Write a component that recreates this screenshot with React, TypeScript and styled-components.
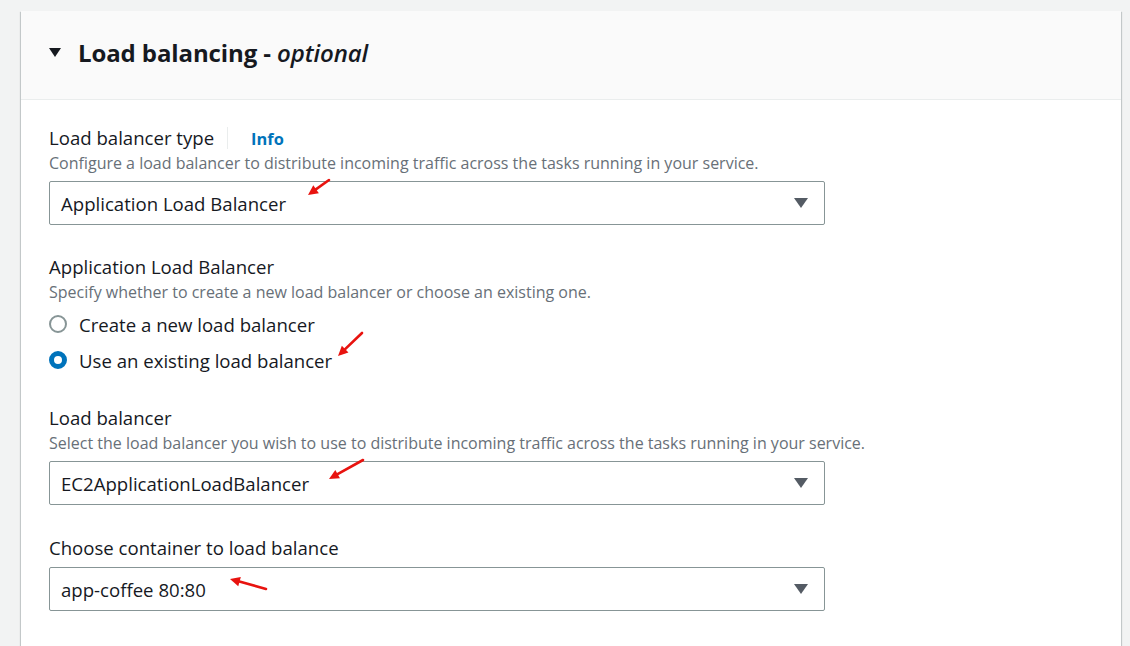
import React from 'react';
import styled, { createGlobalStyle } from 'styled-components';

const GlobalStyle = createGlobalStyle`
    html, body {
        margin: 0;
        padding: 0;
        background: #f2f3f3;
        font-family: 'Open Sans', 'Noto Sans', sans-serif;
        color: #16191f;
    }
`;

const Page = styled.div`
    position: relative;
    padding: 11px 9px 0 21px;
    height: 646px;
    box-sizing: border-box;
    overflow: hidden;
`;

const Card = styled.section`
    background: #ffffff;
    box-shadow: 0 1px 1px 0 rgba(0, 28, 36, 0.3), 1px 1px 1px 0 rgba(0, 28, 36, 0.15),
        -1px 1px 1px 0 rgba(0, 28, 36, 0.15);
    min-height: 700px;
`;

const Header = styled.header`
    display: flex;
    align-items: center;
    gap: 17px;
    height: 89px;
    padding: 0 28px 5px;
    box-sizing: border-box;
    background: #fafafa;
    border-bottom: 1px solid #eaeded;
`;

const Caret = styled.span<{ $color: string; $w: number; $h: number }>`
    display: inline-block;
    width: 0;
    height: 0;
    border-left: ${(p) => p.$w / 2}px solid transparent;
    border-right: ${(p) => p.$w / 2}px solid transparent;
    border-top: ${(p) => p.$h}px solid ${(p) => p.$color};
`;

const Title = styled.h2`
    margin: 0;
    font-size: 24px;
    font-weight: 700;
    letter-spacing: -0.1px;

    em {
        font-weight: 600;
        font-style: italic;
    }
`;

const Body = styled.div`
    display: flex;
    flex-direction: column;
    gap: 29px;
    padding: 25px 28px 0;
`;

const Field = styled.div<{ $offset?: number }>`
    display: flex;
    flex-direction: column;
    margin-top: ${(p) => p.$offset ?? 0}px;
`;

const LabelRow = styled.div`
    display: flex;
    align-items: center;
    height: 26px;
`;

const Label = styled.label`
    font-size: 18.6px;
    line-height: 26px;
`;

const Divider = styled.span`
    width: 1px;
    height: 22px;
    background: #eaeded;
    margin: 0 23px 0 13px;
`;

const InfoLink = styled.a`
    color: #0073bb;
    font-size: 16.4px;
    font-weight: 700;
    text-decoration: none;
`;

const Description = styled.p`
    margin: 0;
    font-size: 16px;
    line-height: 24px;
    color: #687078;
`;

const Select = styled.div`
    display: flex;
    align-items: center;
    justify-content: space-between;
    width: 776px;
    height: 44px;
    margin-top: 6px;
    padding: 0 16px 0 11px;
    box-sizing: border-box;
    border: 1px solid #879596;
    border-radius: 2px;
    font-size: 18.6px;
    color: #16191f;
`;

const RadioGroup = styled.div`
    display: flex;
    flex-direction: column;
    gap: 4px;
    margin-top: 4px;
`;

const RadioRow = styled.label`
    display: flex;
    align-items: center;
    gap: 12px;
    height: 32px;
    font-size: 18.6px;
`;

const RadioDot = styled.span<{ $checked: boolean }>`
    width: 18px;
    height: 18px;
    box-sizing: border-box;
    border-radius: 50%;
    border: ${(p) => (p.$checked ? '5px solid #0073bb' : '2px solid #879596')};
    background: #ffffff;
`;

const Annotation = styled.svg`
    position: absolute;
    left: 0;
    top: 0;
    pointer-events: none;
`;

const arrows = [
    { x1: 329, y1: 180, x2: 308, y2: 195 },
    { x1: 362, y1: 333, x2: 338, y2: 356 },
    { x1: 363, y1: 460, x2: 329, y2: 479 },
    { x1: 266, y1: 589, x2: 230, y2: 579 },
];

function Arrow({ x1, y1, x2, y2 }: { x1: number; y1: number; x2: number; y2: number }) {
    const a = Math.atan2(y2 - y1, x2 - x1);
    const len = 11;
    const spread = 0.45;
    const p1 = [x2 - len * Math.cos(a - spread), y2 - len * Math.sin(a - spread)];
    const p2 = [x2 - len * Math.cos(a + spread), y2 - len * Math.sin(a + spread)];
    const bx = x2 - len * 0.8 * Math.cos(a);
    const by = y2 - len * 0.8 * Math.sin(a);
    return (
        <g>
            <line x1={x1} y1={y1} x2={bx} y2={by} stroke="#e8130f" strokeWidth={2.6} strokeLinecap="round" />
            <polygon points={`${x2},${y2} ${p1[0]},${p1[1]} ${p2[0]},${p2[1]}`} fill="#e8130f" />
        </g>
    );
}

const App = () => {
    return (
        <Page>
            <GlobalStyle />
            <Card>
                <Header>
                    <Caret $color="#16191f" $w={12} $h={9} />
                    <Title>
                        Load balancing - <em>optional</em>
                    </Title>
                </Header>
                <Body>
                    <Field>
                        <LabelRow>
                            <Label>Load balancer type</Label>
                            <Divider />
                            <InfoLink>Info</InfoLink>
                        </LabelRow>
                        <Description>
                            Configure a load balancer to distribute incoming traffic across the tasks running in your
                            service.
                        </Description>
                        <Select>
                            <span>Application Load Balancer</span>
                            <Caret $color="#545b64" $w={14} $h={10} />
                        </Select>
                    </Field>

                    <Field>
                        <Label>Application Load Balancer</Label>
                        <Description>
                            Specify whether to create a new load balancer or choose an existing one.
                        </Description>
                        <RadioGroup>
                            <RadioRow>
                                <RadioDot $checked={false} />
                                Create a new load balancer
                            </RadioRow>
                            <RadioRow>
                                <RadioDot $checked />
                                Use an existing load balancer
                            </RadioRow>
                        </RadioGroup>
                    </Field>

                    <Field>
                        <Label>Load balancer</Label>
                        <Description>
                            Select the load balancer you wish to use to distribute incoming traffic across the tasks
                            running in your service.
                        </Description>
                        <Select>
                            <span>EC2ApplicationLoadBalancer</span>
                            <Caret $color="#545b64" $w={14} $h={10} />
                        </Select>
                    </Field>

                    <Field $offset={1}>
                        <Label>Choose container to load balance</Label>
                        <Select>
                            <span>app-coffee 80:80</span>
                            <Caret $color="#545b64" $w={14} $h={10} />
                        </Select>
                    </Field>
                </Body>
            </Card>
            <Annotation width={1130} height={646}>
                {arrows.map((a, i) => (
                    <Arrow key={i} {...a} />
                ))}
            </Annotation>
        </Page>
    );
};

export default App;
